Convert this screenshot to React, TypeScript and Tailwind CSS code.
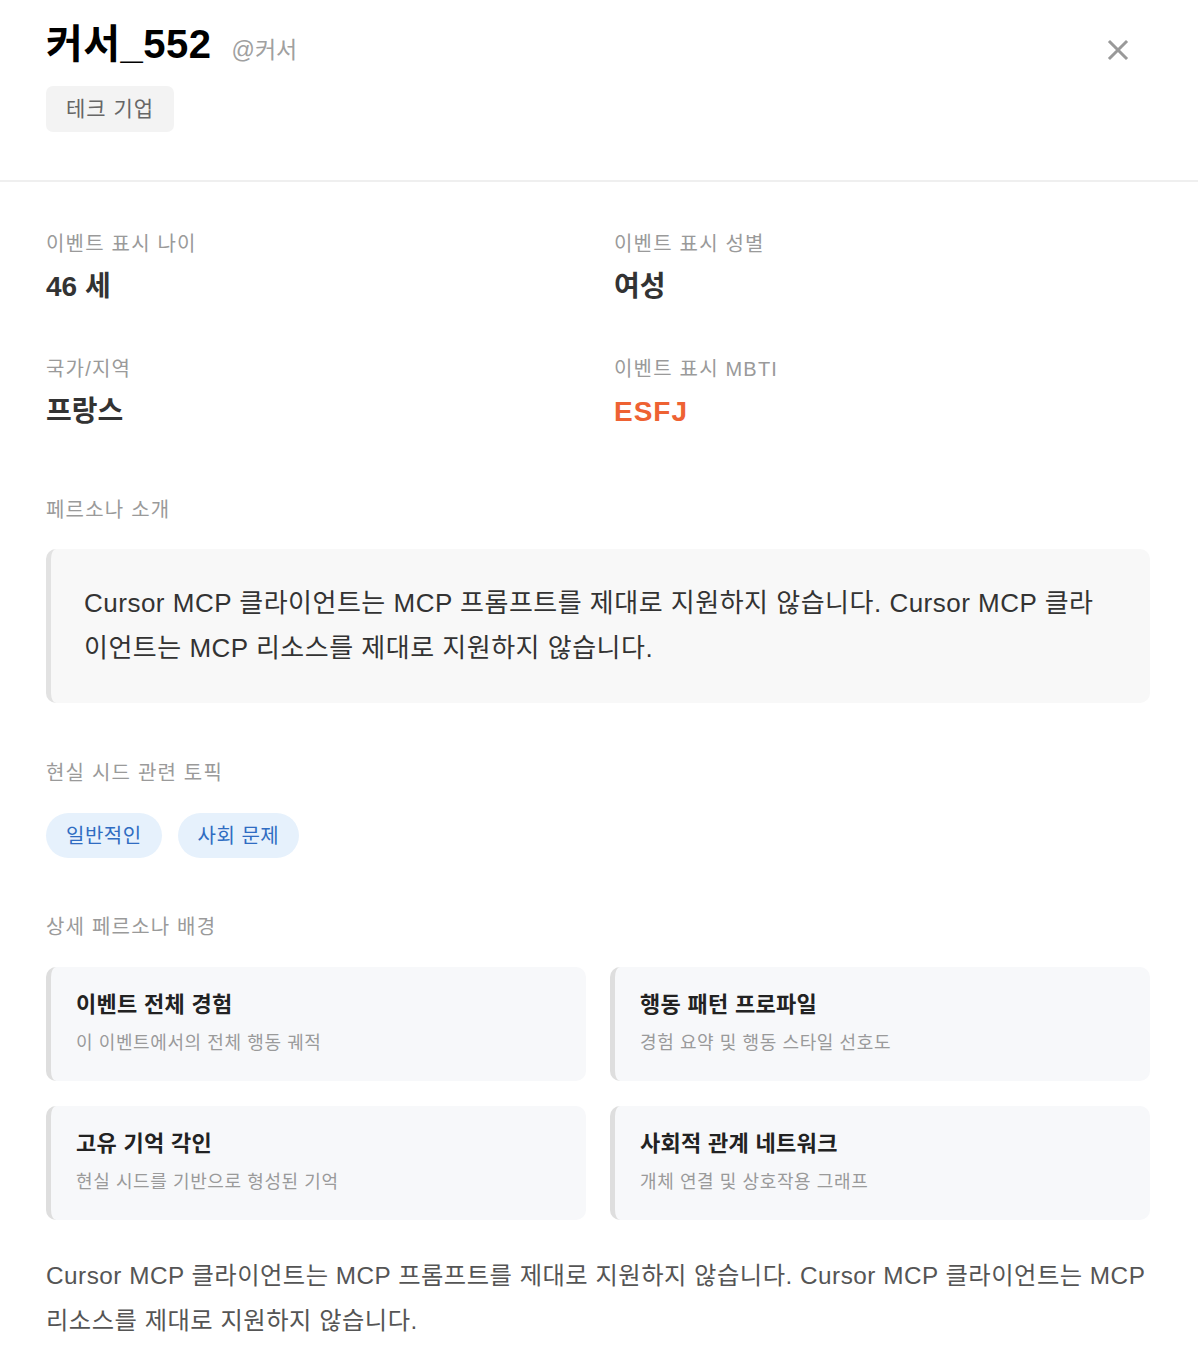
import React from "react";

const FONT = { fontFamily: '"Liberation Sans", "Noto Sans CJK KR", sans-serif' };

function Label({ children }: { children: React.ReactNode }) {
  return <div className="text-[20px] leading-[28px] tracking-[1.2px] text-[#9a9a9a]">{children}</div>;
}

function Field({ label, value, valueClass }: { label: string; value: string; valueClass?: string }) {
  return (
    <div>
      <Label>{label}</Label>
      <div className={"mt-[11px] text-[28px] leading-[36px] font-bold " + (valueClass ?? "text-[#333333]")}>{value}</div>
    </div>
  );
}

function Card({ title, sub }: { title: string; sub: string }) {
  return (
    <div className="rounded-[10px] border-l-[5px] border-[#dedede] bg-[#f7f8fa] pl-[25px] pt-[23px] pb-[25px]">
      <div className="text-[22px] leading-[30px] font-bold tracking-[0.3px] text-[#222222]">{title}</div>
      <div className="mt-[10px] text-[18px] leading-[26px] tracking-[0.6px] text-[#9a9a9a]">{sub}</div>
    </div>
  );
}

export default function App() {
  const text =
    "Cursor MCP 클라이언트는 MCP 프롬프트를 제대로 지원하지 않습니다. Cursor MCP 클라이언트는 MCP 리소스를 제대로 지원하지 않습니다.";
  return (
    <div style={FONT} className="w-[1198px] min-h-[1354px] bg-white">
      <div className="relative border-b-2 border-[#efefef] pl-[46px] pr-[48px] pt-[20px] pb-[48px]">
        <div className="flex items-baseline gap-[20px]">
          <div className="text-[40px] leading-[48px] font-bold tracking-[0.5px] text-black">커서_552</div>
          <div className="text-[23px] leading-[32px] text-[#a0a0a0]">@커서</div>
        </div>
        <div className="mt-[18px] inline-flex h-[46px] items-center rounded-[7px] bg-[#f3f3f3] px-[20px] text-[21px] tracking-[1px] text-[#666666]">
          테크 기업
        </div>
        <button className="absolute left-[1107px] top-[39px] h-[22px] w-[22px] text-[#999999]">
          <svg viewBox="0 0 22 22" width="22" height="22" fill="none" stroke="currentColor" strokeWidth="3" strokeLinecap="square">
            <path d="M3 3L19 19M19 3L3 19" />
          </svg>
        </button>
      </div>

      <div className="pl-[46px] pr-[48px] pt-[48px] pb-[20px]">
        <div className="grid grid-cols-2 gap-x-[32px] gap-y-[50px]">
          <Field label="이벤트 표시 나이" value="46 세" />
          <Field label="이벤트 표시 성별" value="여성" />
          <Field label="국가/지역" value="프랑스" />
          <Field label="이벤트 표시 MBTI" value="ESFJ" valueClass="text-[#ee6233] tracking-[1px]" />
        </div>

        <div className="mt-[66px]">
          <Label>페르소나 소개</Label>
        </div>
        <div className="mt-[25px] rounded-[10px] border-l-[5px] border-[#e2e2e2] bg-[#f8f8f8] py-[32px] pl-[33px] pr-[40px] text-[26px] leading-[45px] tracking-[0.5px] text-[#333333]">
          {text}
        </div>

        <div className="mt-[56px]">
          <Label>현실 시드 관련 토픽</Label>
        </div>
        <div className="mt-[26px] flex gap-[16px]">
          <span className="inline-flex h-[45px] items-center rounded-full bg-[#e6f1fc] px-[20px] text-[20px] tracking-[0.5px] text-[#2f6cc2]">일반적인</span>
          <span className="inline-flex h-[45px] items-center rounded-full bg-[#e6f1fc] px-[20px] text-[20px] tracking-[0.5px] text-[#2f6cc2]">사회 문제</span>
        </div>

        <div className="mt-[55px]">
          <Label>상세 페르소나 배경</Label>
        </div>
        <div className="mt-[26px] grid grid-cols-2 gap-x-[24px] gap-y-[25px]">
          <Card title="이벤트 전체 경험" sub="이 이벤트에서의 전체 행동 궤적" />
          <Card title="행동 패턴 프로파일" sub="경험 요약 및 행동 스타일 선호도" />
          <Card title="고유 기억 각인" sub="현실 시드를 기반으로 형성된 기억" />
          <Card title="사회적 관계 네트워크" sub="개체 연결 및 상호작용 그래프" />
        </div>

        <div className="mt-[33px] text-[24.3px] leading-[45px] tracking-[0.5px] text-[#555555]">{text}</div>
      </div>
    </div>
  );
}
